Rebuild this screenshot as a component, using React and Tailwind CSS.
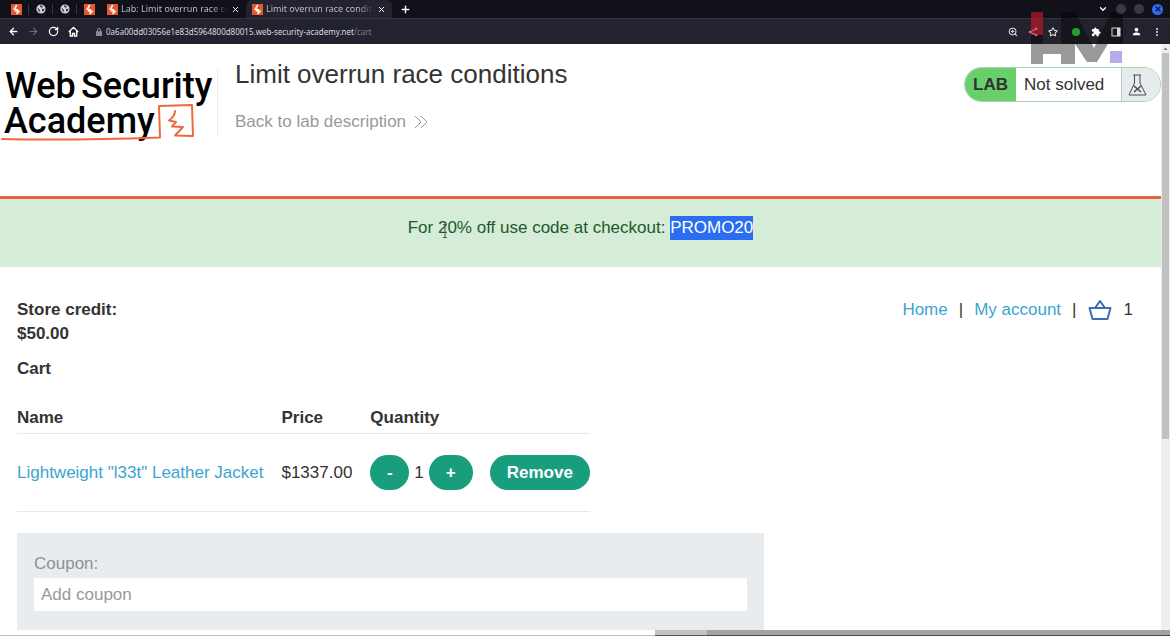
import { ArrowLeft, ArrowRight, RotateCw, ZoomIn, Star, EllipsisVertical, X, Plus, ChevronDown } from "lucide-react";
import { MdExtension, MdPerson } from "react-icons/md";

function BurpIcon() {
  return (
    <svg viewBox="0 0 11 11" className="size-[11px] shrink-0" aria-hidden="true">
      <rect width="11" height="11" fill="#e8562c" />
      <path d="M5.800 1 3.200 5.300 6 5.800 4.800 7 8 7.300 5.500 10" fill="none" stroke="#fff" strokeWidth="1.500" />
    </svg>
  );
}

function GlobeIcon() {
  return (
    <svg viewBox="0 0 10 10" className="size-[10px] shrink-0" aria-hidden="true">
      <circle cx="5" cy="5" r="4.600" fill="#d2d3d7" />
      <path d="M1.500 3.500 3.500 5.500 4.500 8.500 2.500 7ZM4 1.300 7 2 6 3.800 4.500 3.300ZM6 5 8.600 4.800 7.500 7.600 6 7Z" fill="#33343f" />
    </svg>
  );
}

function Tab({ title, active }) {
  return (
    <div className={active ? "flex w-[146px] items-center gap-[3px] rounded-t-md bg-[#23232f] px-[6px] text-[#b9bac2]" : "flex w-[145px] items-center gap-[3px] px-[6px] text-[#b9bac2]"}>
      <BurpIcon />
      <span className="min-w-0 flex-1 overflow-hidden whitespace-nowrap mask-r-from-85%">{title}</span>
      <button type="button" aria-label="Close tab"><X className="size-[9px] text-white" strokeWidth={2.5} /></button>
    </div>
  );
}

function BrowserChrome() {
  return (
    <div className="shrink-0 font-['Noto_Sans',sans-serif] text-[9px] text-white">
      <div className="flex h-[18px] items-stretch bg-[#111119]">
        <div className="flex items-center divide-x divide-[#363741] pl-[5px]">
          <span className="flex w-6 justify-center"><BurpIcon /></span>
          <span className="flex w-6 justify-center"><GlobeIcon /></span>
          <span className="flex w-6 justify-center"><GlobeIcon /></span>
          <span className="flex w-6 justify-center"><BurpIcon /></span>
        </div>
        <Tab title="Lab: Limit overrun race conditions" />
        <Tab title="Limit overrun race conditions" active />
        <button type="button" aria-label="New tab" className="ml-2"><Plus className="size-[11px]" strokeWidth={3} /></button>
        <div className="relative z-10 ml-auto flex items-center gap-2 pr-[7px]">
          <ChevronDown className="size-[10px]" strokeWidth={3} />
          <span className="size-[10px] rounded-full bg-[#3a3a44]" />
          <span className="size-[10px] rounded-full bg-[#3a3a44]" />
          <button type="button" aria-label="Close window" className="flex size-[11px] items-center justify-center rounded-full bg-[#2d6ff0]">
            <X className="size-2 text-[#101840]" strokeWidth={4} />
          </button>
        </div>
      </div>
      <div className="flex h-[26px] items-center border-t border-[#33343f] bg-[#23232f] px-2">
        <div className="flex items-center gap-[9px]">
          <ArrowLeft className="size-[11px]" strokeWidth={2.8} />
          <ArrowRight className="size-[11px] text-[#6b6c76]" strokeWidth={2.5} />
          <RotateCw className="size-[11px]" strokeWidth={2.8} />
          <svg viewBox="0 0 11 11" className="size-[11px]" fill="none" stroke="currentColor" strokeWidth="1.300" aria-hidden="true">
            <path d="M.8 6 5.500 1.300 10.200 6M2.300 5v5h2.200V7.500h2V10h2.200V5" />
          </svg>
        </div>
        <svg viewBox="0 0 8 8" className="ml-4 size-2 text-[#8c8d95]" aria-hidden="true">
          <rect x="1" y="3.200" width="6" height="4.800" fill="currentColor" />
          <path d="M2.500 3.500V2a1.500 1.500 0 0 1 3 0v1.500" fill="none" stroke="currentColor" />
        </svg>
        <span className="ml-[3px] text-[8px] text-[#d9dade]">0a6a00dd03056e1e83d5964800d80015.web-security-academy.net<span className="text-[#7d7e88]">/cart</span></span>
        <div className="relative z-10 ml-auto flex items-center gap-[10px] text-[#d9dade]">
          <ZoomIn className="size-[10px]" strokeWidth={2.5} />
          <svg viewBox="0 0 10 10" className="size-[10px] text-[#d77c84]" fill="currentColor" stroke="currentColor" aria-hidden="true">
            <path d="M8.300 1.800 1.800 5l6.500 3.200" fill="none" />
            <circle cx="8.300" cy="1.800" r=".7" />
            <circle cx="1.800" cy="5" r=".7" />
            <circle cx="8.300" cy="8.200" r=".7" />
          </svg>
          <Star className="size-[10px]" strokeWidth={2.5} />
          <span className="ml-[3px] flex size-[10px] items-center justify-center"><span className="size-2 rounded-full bg-[#22a02a]" /></span>
          <MdExtension className="size-[10px] text-white" />
          <svg viewBox="0 0 10 10" className="size-[10px]" aria-hidden="true">
            <rect x="1" y="1" width="8" height="8" fill="none" stroke="currentColor" />
            <path d="M6 1h3v8H6Z" fill="currentColor" />
          </svg>
          <MdPerson className="size-[11px] text-white" />
          <EllipsisVertical className="size-[10px]" strokeWidth={3} />
        </div>
      </div>
    </div>
  );
}

function Watermark() {
  return (
    <svg viewBox="0 0 92 54" className="pointer-events-none absolute top-3 right-[47px] h-[54px] w-[92px]" aria-hidden="true">
      <path d="M0 0h12v23H0Z" fill="#b01826" fillOpacity=".75" />
      <path d="M30 0h14L63 36 80 0h12v32H77L66 50H56L44 32v20H30V42H12v10H0V23h12v9h18Z" fill="#000" fillOpacity=".4" />
      <path d="M79 39h12v12H79Z" fill="#b3adee" />
    </svg>
  );
}

function AcademyLogo() {
  return (
    <svg viewBox="0 0 218 84" className="h-[84px] w-[218px] shrink-0" role="img" aria-label="Web Security Academy">
      <g fontFamily="Roboto, sans-serif" fontWeight="500" fontSize="36" fill="#000">
        <text x="5" y="32">Web</text>
        <text x="81" y="32">Security</text>
        <text x="4" y="67">Academy</text>
      </g>
      <g fill="none" stroke="#ee6a3d" strokeWidth="2" strokeLinejoin="round" strokeLinecap="round">
        <path d="M2 73Q70 74.500 160 71.500L159 40 192 39 193 70 175 69.500 183 61 172 60.500 176 56 169 54.500Q175 50 175 45" />
      </g>
      <path d="M217.500 2v68" stroke="#ececec" />
    </svg>
  );
}

function LabStatus() {
  return (
    <div className="mt-[23px] flex h-[35px] shrink-0 items-stretch overflow-hidden rounded-full border border-[#a9d3b0] bg-white">
      <strong className="flex w-[51px] items-center justify-center bg-[#69cf6b]">LAB</strong>
      <span className="flex w-[105px] items-center pl-2">Not solved</span>
      <span className="flex w-[39px] items-center border-l border-[#b7d0c5] bg-[#e6ebee] pl-[6px]">
        <svg viewBox="0 0 20 24" className="h-6 w-5" fill="none" stroke="#4a4c4e" strokeLinejoin="round" role="img" aria-label="Flask">
          <path d="M5 2h8M6.500 2v8L1 22h17l-6-12V2" />
          <path d="m6 13 7 6m0-6-7 6" strokeWidth="1.600" />
        </svg>
      </span>
    </div>
  );
}

const pill = "h-[35px] rounded-full bg-[#189d7d] font-bold text-white";

export default function App() {
  return (
    <div className="relative flex h-screen flex-col overflow-hidden bg-white font-['Liberation_Sans',Arial,sans-serif] text-[17px] leading-6 text-[#333]">
      <BrowserChrome />
      <div className="flex min-h-0 flex-1">
        <div className="min-w-0 flex-1 overflow-hidden">
          <header className="flex h-[155px] items-start border-b-3 border-[#e4643c]">
            <div className="mt-[22px] shrink-0"><AcademyLogo /></div>
            <div className="min-w-0 flex-1 pt-4 pl-[17px]">
              <h1 className="text-[26px] leading-7">Limit overrun race conditions</h1>
              <a href="#lab" className="mt-[22px] flex items-center gap-2 text-[#999]">
                Back to lab description
                <svg viewBox="0 0 14 14" className="size-[14px]" fill="none" stroke="currentColor" aria-hidden="true">
                  <path d="m1 1 6 6-6 6M7 1l6 6-6 6" />
                </svg>
              </a>
            </div>
            <LabStatus />
          </header>
          <section className="relative flex h-[68px] justify-center bg-[#d5ecd8] pt-[17px] text-[#1c5a2a]">
            <p>For 20% off use code at checkout: <mark className="inline-block bg-[#2b6df0] text-white">PROMO20</mark></p>
          </section>
          <main className="px-[17px] pt-[31px]">
            <div className="flex justify-between">
              <strong>Store credit:<br />$50.00</strong>
              <nav className="flex h-6 items-center gap-[11px] pr-[11px]">
                <a href="#home" className="text-[#3ba5d0]">Home</a>
                <span>|</span>
                <a href="#account" className="text-[#3ba5d0]">My account</a>
                <span>|</span>
                <a href="#cart" className="flex items-center gap-3">
                  <svg viewBox="0 0 24 22" className="h-[22px] w-6" fill="none" stroke="#3b6cb4" strokeWidth="2" strokeLinejoin="round" role="img" aria-label="Basket">
                    <path d="M1.500 9h21L19.500 20h-15ZM7 9l5-7 5 7" />
                  </svg>
                  1
                </a>
              </nav>
            </div>
            <h2 className="mt-[11px] font-bold">Cart</h2>
            <table className="mt-[25px] border-collapse text-left">
              <thead>
                <tr className="border-b border-[#e8e8e8]">
                  <th className="pr-[18px] pb-[3px]">Name</th>
                  <th className="pr-[18px] pb-[3px]">Price</th>
                  <th className="pr-[17px] pb-[3px]">Quantity</th>
                  <th />
                </tr>
              </thead>
              <tbody>
                <tr className="h-[78px] border-b border-[#e8e8e8]">
                  <td className="pr-[18px]"><a href="#product" className="text-[#3ba5d0]">Lightweight "l33t" Leather Jacket</a></td>
                  <td className="pr-[18px]">$1337.00</td>
                  <td className="pr-[17px]">
                    <div className="flex items-center gap-[5px]">
                      <button type="button" className={pill + " w-[39px]"}>-</button>
                      1
                      <button type="button" className={pill + " w-11"}>+</button>
                    </div>
                  </td>
                  <td><button type="button" className={pill + " w-[100px]"}>Remove</button></td>
                </tr>
              </tbody>
            </table>
            <form className="mt-[21px] w-[747px] max-w-full bg-[#e8ecef] px-[17px] pt-[19px] pb-[60px]">
              <label htmlFor="coupon" className="block text-[#8f9295]">Coupon:</label>
              <input id="coupon" placeholder="Add coupon" className="mt-[2px] block h-[33px] w-full bg-white px-[7px] placeholder:text-[#999]" />
            </form>
          </main>
        </div>
        <div className="flex w-[9px] shrink-0 flex-col items-center bg-[#eeeeee]">
          <svg viewBox="0 0 9 9" className="size-[9px] shrink-0" aria-hidden="true"><path d="m2.500 6 2-2.500 2 2.500Z" fill="#777" /></svg>
          <span className="h-[386px] w-[7px] shrink-0 bg-[#c1c1c1]" />
        </div>
      </div>
      <div className="absolute inset-x-0 bottom-0 flex h-[6px]">
        <span className="w-[56%] border-b border-[#bdbdbd] bg-white" />
        <span className="w-[4.400%] border-b border-[#555] bg-[#c2c2c2]" />
        <span className="flex-1 border-b border-[#4a4a4a] bg-[#a3a3a3]" />
      </div>
      <Watermark />
      <svg viewBox="0 0 6 14" className="pointer-events-none absolute top-[224px] left-[442px] h-[14px] w-[6px]" fill="none" stroke="#555" aria-hidden="true">
        <path d="M1 .5h4M1 13.500h4M3 .5v13" />
      </svg>
    </div>
  );
}
